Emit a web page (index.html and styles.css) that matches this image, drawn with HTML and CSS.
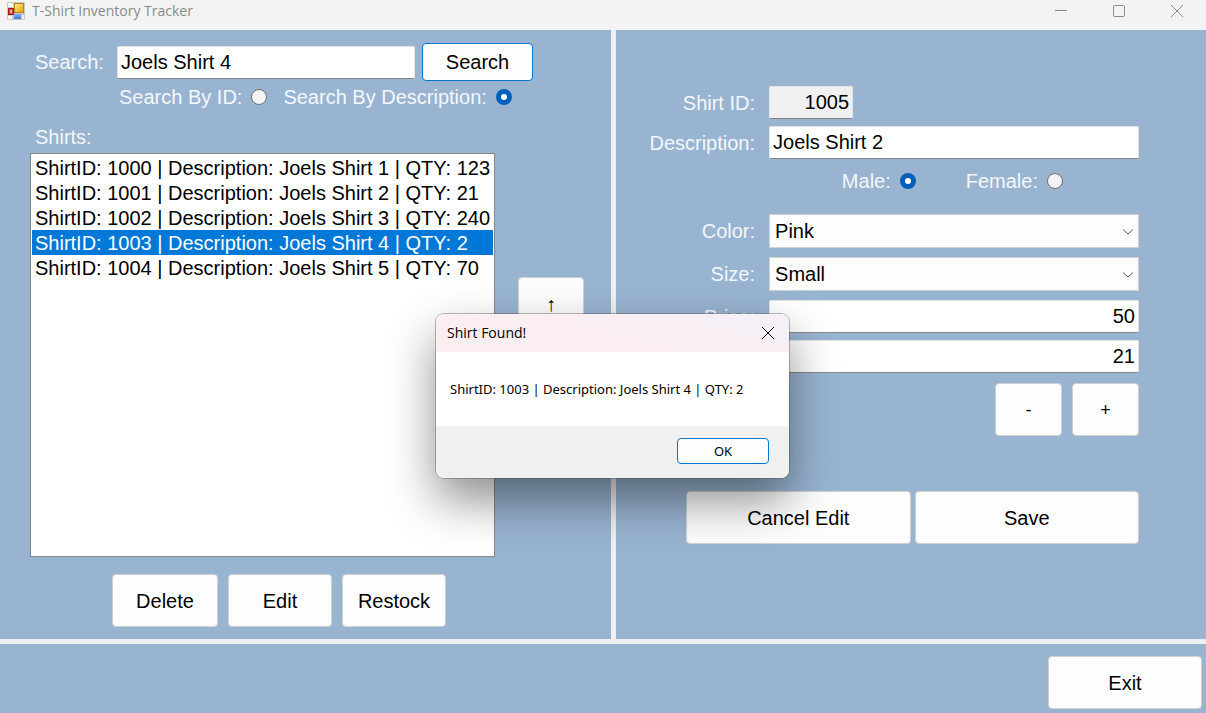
FILE: index.html
```html
<!DOCTYPE html>
<html lang="en">
<head>
<meta charset="utf-8">
<title>T-Shirt Inventory Tracker</title>
<link rel="stylesheet" href="styles.css">
</head>
<body>
<div class="window">
  <header class="titlebar">
    <svg class="app-icon" width="18" height="18" viewBox="0 0 18 18" aria-hidden="true">
      <defs>
        <linearGradient id="gold" x1="0" y1="0" x2="1" y2="1"><stop offset="0" stop-color="#ffe88a"/><stop offset="1" stop-color="#e5a800"/></linearGradient>
        <linearGradient id="blue" x1="0" y1="0" x2="0" y2="1"><stop offset="0" stop-color="#82b0f5"/><stop offset="1" stop-color="#3c78e0"/></linearGradient>
      </defs>
      <rect width="18" height="18" rx="1" fill="#c9c9c9"/>
      <rect x="1" y="1" width="5" height="4" fill="#f6f6f6"/>
      <rect x="1" y="14" width="4" height="3" fill="#f6f6f6"/>
      <rect x="15" y="13" width="2" height="4" fill="#f6f6f6"/>
      <rect x="7" y="1" width="10" height="10" fill="#b58112"/>
      <rect x="8" y="2" width="8" height="8" fill="url(#gold)"/>
      <rect x="1" y="6" width="6" height="7" fill="#a31d14"/>
      <rect x="2" y="7" width="4" height="5" fill="#d6453a"/>
      <rect x="3" y="8" width="2" height="3" fill="#f2a59e"/>
      <rect x="7" y="12" width="7" height="5" fill="url(#blue)"/>
    </svg>
    <h1 class="app-title">T-Shirt Inventory Tracker</h1>
    <div class="window-buttons">
      <button class="window-button" type="button" aria-label="Minimize"><svg width="14" height="14" viewBox="0 0 14 14"><path d="M1 6.500h12"/></svg></button>
      <button class="window-button" type="button" aria-label="Maximize"><svg width="14" height="14" viewBox="0 0 14 14"><rect x="1.500" y="1.500" width="11" height="11" rx="1"/></svg></button>
      <button class="window-button" type="button" aria-label="Close"><svg width="14" height="14" viewBox="0 0 14 14"><path d="M1 1l12 12M13 1L1 13"/></svg></button>
    </div>
  </header>

  <main class="panels">
    <section class="panel browse">
      <form class="search-form">
        <div class="search-row">
          <label class="search-label" for="search">Search:</label>
          <input class="field search-field" id="search" type="text" value="Joels Shirt 4">
          <button class="button search-button" type="button">Search</button>
        </div>
        <div class="search-modes">
          <label class="choice">Search By ID:<input class="radio" type="radio" name="mode"></label>
          <label class="choice">Search By Description:<input class="radio" type="radio" name="mode" checked></label>
        </div>
      </form>
      <label class="list-label" for="shirts">Shirts:</label>
      <div class="list-area">
        <select class="list" id="shirts" size="5">
          <option>ShirtID: 1000 | Description: Joels Shirt 1 | QTY: 123</option>
          <option>ShirtID: 1001 | Description: Joels Shirt 2 | QTY: 21</option>
          <option>ShirtID: 1002 | Description: Joels Shirt 3 | QTY: 240</option>
          <option selected>ShirtID: 1003 | Description: Joels Shirt 4 | QTY: 2</option>
          <option>ShirtID: 1004 | Description: Joels Shirt 5 | QTY: 70</option>
        </select>
        <button class="button move-button" type="button">↑</button>
      </div>
      <div class="list-actions">
        <button class="button" type="button">Delete</button>
        <button class="button" type="button">Edit</button>
        <button class="button" type="button">Restock</button>
      </div>
    </section>

    <section class="panel details">
      <form class="detail-form">
        <div class="row">
          <label class="row-label" for="shirt-id">Shirt ID:</label>
          <input class="field number id-field" id="shirt-id" type="text" value="1005" readonly>
        </div>
        <div class="row">
          <label class="row-label" for="description">Description:</label>
          <input class="field" id="description" type="text" value="Joels Shirt 2">
        </div>
        <div class="gender">
          <label class="choice">Male:<input class="radio" type="radio" name="gender" checked></label>
          <label class="choice">Female:<input class="radio" type="radio" name="gender"></label>
        </div>
        <div class="row combo-row">
          <label class="row-label" for="color">Color:</label>
          <div class="combo">
            <select class="combo-select" id="color"><option>Pink</option></select>
            <svg class="chevron" width="12" height="8" viewBox="0 0 12 8" aria-hidden="true"><path d="M1 1.500l5 4.500l5-4.500"/></svg>
          </div>
        </div>
        <div class="row combo-row">
          <label class="row-label" for="size">Size:</label>
          <div class="combo">
            <select class="combo-select" id="size"><option>Small</option></select>
            <svg class="chevron" width="12" height="8" viewBox="0 0 12 8" aria-hidden="true"><path d="M1 1.500l5 4.500l5-4.500"/></svg>
          </div>
        </div>
        <div class="row">
          <label class="row-label" for="price">Price:</label>
          <input class="field number" id="price" type="text" value="50">
        </div>
        <div class="row">
          <input class="field number quantity-field" type="text" value="21" aria-label="Quantity">
        </div>
        <div class="steppers">
          <button class="button step-button" type="button">-</button>
          <button class="button step-button" type="button">+</button>
        </div>
        <div class="form-actions">
          <button class="button" type="button">Cancel Edit</button>
          <button class="button" type="button">Save</button>
        </div>
      </form>
    </section>

    <footer class="panel footer">
      <button class="button exit-button" type="button">Exit</button>
    </footer>
  </main>

  <dialog class="message" open aria-labelledby="message-title">
    <div class="message-header">
      <h2 class="message-title" id="message-title">Shirt Found!</h2>
      <button class="message-close" type="button" aria-label="Close"><svg width="14" height="14" viewBox="0 0 14 14"><path d="M1 1l12 12M13 1L1 13"/></svg></button>
    </div>
    <p class="message-text">ShirtID: 1003 | Description: Joels Shirt 4 | QTY: 2</p>
    <div class="message-footer">
      <button class="message-ok" type="button">OK</button>
    </div>
  </dialog>
</div>
</body>
</html>
```
FILE: styles.css
```css
* {
  box-sizing: border-box;
}

body {
  margin: 0;
  font: 20px/24px "Liberation Sans", Arial, sans-serif;
  color: #000;
}

button, input, select {
  font: inherit;
  color: inherit;
  margin: 0;
}

.window {
  position: relative;
  display: flex;
  flex-direction: column;
  min-height: 100vh;
  overflow: hidden;
  background: #f0f0f0;
}

/* Title bar */
.titlebar {
  display: flex;
  align-items: center;
  gap: 7px;
  height: 30px;
  padding: 0 0 8px 7px;
  background: #f3f3f3;
}

.app-title {
  flex: 1;
  margin: 0;
  font: 14px/20px "Open Sans", "Noto Sans", sans-serif;
  color: #8a8a8a;
}

.window-buttons {
  display: flex;
}

.window-button {
  display: flex;
  align-items: center;
  justify-content: center;
  width: 58px;
  height: 22px;
  padding: 0;
  border: 0;
  background: none;
}

.window-button svg {
  fill: none;
  stroke: #8a8a8a;
}

/* Panels */
.panels {
  flex: 1;
  display: grid;
  grid-template-columns: 611fr 590fr;
  grid-template-rows: 1fr auto;
  gap: 5px;
}

.panel {
  background: #99b4d1;
}

.footer {
  grid-column: 1 / -1;
  display: flex;
  justify-content: flex-end;
  padding: 12px 4px 4px;
}

/* Shared controls */
.button {
  height: 53px;
  padding: 0;
  border: 1px solid #d0d0d0;
  border-radius: 4px;
  background: #fdfdfd;
}

.field {
  width: 100%;
  height: 33px;
  padding: 0 3px;
  border: 1px solid #e3e3e3;
  border-bottom-color: #868686;
  border-radius: 2px;
  background: #fff;
  outline: 0;
}

.number {
  text-align: right;
}

.choice {
  display: flex;
  align-items: center;
  gap: 9px;
}

.radio {
  appearance: none;
  width: 16px;
  height: 16px;
  border: 1px solid #707070;
  border-radius: 50%;
  background: #f3f3f3;
}

.radio:checked {
  border: 5px solid #005fb8;
  background: #fff;
}

/* Left panel */
.browse {
  display: flex;
  flex-direction: column;
  padding: 13px 27px 12px 30px;
  color: #f4f7fb;
}

.browse .button, .browse .field {
  color: #000;
}

.search-row {
  display: flex;
  align-items: center;
  padding-left: 5px;
}

.search-label {
  width: 82px;
}

.search-field {
  width: 298px;
}

.search-button {
  width: 111px;
  height: 38px;
  margin-left: 7px;
}

.browse .search-button {
  border-color: #0078d4;
}

.search-modes {
  display: flex;
  gap: 16px;
  padding: 4px 0 0 89px;
}

.list-label {
  padding: 16px 0 4px 5px;
}

.list-area {
  flex: 1;
  display: flex;
  gap: 23px;
}

.list {
  flex: 1;
  padding: 1px;
  border: 1px solid #828790;
  border-radius: 0;
  background: #fff;
  color: #000;
  outline: 0;
  overflow: hidden;
}

.list option {
  min-height: 25px;
  padding: 2px 3px 0;
  line-height: 23px;
}

.list option:checked {
  background: linear-gradient(#0078d7, #0078d7);
  -webkit-text-fill-color: #fff;
}

.move-button {
  width: 66px;
  margin-top: 124px;
}

.list-actions {
  display: grid;
  grid-template-columns: 106px 104px 104px;
  gap: 10px;
  padding: 17px 0 0 82px;
}

/* Right panel */
.detail-form {
  display: flex;
  flex-direction: column;
  gap: 7px;
  padding: 56px 67px 0 20px;
  color: #f4f7fb;
}

.detail-form .button, .detail-form .field, .detail-form .combo {
  color: #000;
}

.row {
  display: grid;
  grid-template-columns: 119px 1fr;
  column-gap: 14px;
  align-items: center;
}

.row-label {
  text-align: right;
}

.id-field {
  width: 84px;
  background: #f0f0f0;
}

.quantity-field {
  grid-column: 2;
}

.gender {
  display: flex;
  justify-content: flex-end;
  gap: 50px;
  padding: 3px 76px 14px 0;
}

.combo-row {
  margin-bottom: 2px;
}

.combo {
  position: relative;
}

.combo-select {
  appearance: none;
  display: block;
  width: 100%;
  height: 34px;
  padding: 0 5px;
  border: 1px solid #d0d0d0;
  border-radius: 0;
  background: #fdfdfd;
  outline: 0;
}

.chevron {
  position: absolute;
  top: 14px;
  right: 5px;
  fill: none;
  stroke: #5c5c5c;
  pointer-events: none;
}

.steppers {
  display: flex;
  justify-content: flex-end;
  gap: 10px;
  padding-top: 3px;
}

.step-button {
  width: 67px;
  font-size: 18px;
}

.form-actions {
  display: grid;
  grid-template-columns: 1fr 1fr;
  gap: 4px;
  padding: 48px 0 0 50px;
}

.exit-button {
  width: 154px;
}

/* Message box */
.message {
  position: absolute;
  top: 314px;
  left: 436px;
  width: 353px;
  margin: 0;
  padding: 0;
  border: 0;
  border-radius: 8px;
  background: #fff;
  color: #000;
  font: 13px/20px "Noto Sans", sans-serif;
  box-shadow: 0 0 0 1px rgba(80, 80, 80, .4), 0 22px 48px rgba(0, 0, 0, .45);
}

.message-header {
  display: flex;
  align-items: center;
  justify-content: space-between;
  height: 38px;
  padding: 0 14px 0 11px;
  border-radius: 8px 8px 0 0;
  background: linear-gradient(15deg, #fbeef0 40%, #f4f0f8);
}

.message-title {
  margin: 0;
  font: 14px/20px "Open Sans", "Noto Sans", sans-serif;
}

.message-close {
  display: flex;
  padding: 0;
  border: 0;
  background: none;
}

.message-close svg {
  fill: none;
  stroke: #000;
}

.message-text {
  margin: 0;
  padding: 27px 14px;
}

.message-footer {
  display: flex;
  justify-content: flex-end;
  padding: 12px 20px 14px;
  border-radius: 0 0 8px 8px;
  background: #f0f0f0;
}

.message-ok {
  width: 92px;
  height: 26px;
  padding: 0;
  border: 1px solid #0078d4;
  border-radius: 4px;
  background: #fdfdfd;
}
```
